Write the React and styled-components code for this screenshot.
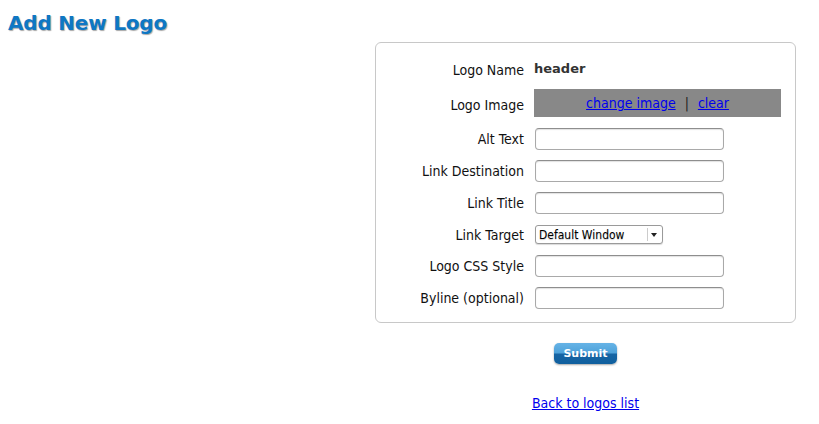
import React from "react";
import styled, { createGlobalStyle } from "styled-components";

const Global = createGlobalStyle`
  html, body { margin: 0; padding: 0; background: #fff; }
  body { font-family: "DejaVu Sans Condensed", "DejaVu Sans", Verdana, sans-serif; color: #000; }
`;

const Page = styled.div`
  padding: 8px 8px 0 8px;
`;

const Title = styled.h1`
  margin: 0;
  font-family: "DejaVu Sans", Verdana, sans-serif;
  font-size: 20px;
  font-weight: bold;
  color: #0e77c4;
  text-shadow: 1px 1px 1px rgba(0, 0, 0, 0.35);
  line-height: 30px;
  letter-spacing: -0.2px;
`;

const Main = styled.div`
  margin-left: 367px;
  width: 421px;
  display: flex;
  flex-direction: column;
  align-items: center;
`;

const Panel = styled.div`
  margin-top: 4px;
  width: 100%;
  box-sizing: border-box;
  border: 1px solid #c8c8c8;
  border-radius: 6px;
  padding: 16px 14px 13px 0;
  display: grid;
  grid-template-columns: 148px 1fr;
  column-gap: 10px;
  row-gap: 10px;
  align-items: center;
`;

const Label = styled.div`
  text-align: right;
  font-size: 14px;
  color: #111;
`;

const Field = styled.div`
  height: ${(p) => p.$h || 22}px;
  display: flex;
  align-items: center;
`;

const Value = styled.div`
  font-family: "DejaVu Sans", Verdana, sans-serif;
  font-weight: bold;
  font-size: 13px;
  color: #333;
  margin-top: -4px;
`;

const ImageBar = styled.div`
  background: #888888;
  height: 28px;
  margin: -2px 0 1px 0;
  display: flex;
  align-items: center;
  justify-content: center;
  gap: 9px;
  font-size: 14px;
  color: #222;
`;

const Link = styled.a`
  color: #0000ee;
  text-decoration: underline;
  font-size: 14px;
  cursor: pointer;
`;

const Input = styled.input`
  display: block;
  box-sizing: border-box;
  width: 189px;
  height: 22px;
  margin: 0 0 0 1px;
  border: 1px solid #a9a9a9;
  border-top-color: #8e8e8e;
  border-radius: 4px;
  box-shadow: inset 0 1px 1px rgba(0,0,0,0.12);
  background: #fff;
  padding: 0 4px;
  font-size: 13px;
`;

const SelectBox = styled.div`
  box-sizing: border-box;
  width: 128px;
  height: 19px;
  margin-left: 1px;
  border: 1px solid #9a9a9a;
  border-radius: 3px;
  background: #fff;
  display: flex;
  align-items: center;
  justify-content: space-between;
  padding: 0 3px 0 3px;
  font-family: "DejaVu Sans Condensed", "DejaVu Sans", sans-serif;
  font-size: 12px;
  color: #000;
  text-shadow: 0 1px 1px rgba(0,0,0,0.2);
  box-shadow: 0 1px 1px rgba(0,0,0,0.15);
`;

const Arrow = styled.div`
  width: 11px;
  height: 13px;
  border-left: 1px solid #ccc;
  display: flex;
  align-items: center;
  justify-content: center;
  &::after {
    content: "";
    border-left: 3px solid transparent;
    border-right: 3px solid transparent;
    border-top: 4px solid #222;
  }
`;

const Button = styled.button`
  margin-top: 20px;
  width: 63px;
  height: 21px;
  border: none;
  border-radius: 5px;
  background: linear-gradient(#66b3e6 0%, #4ea2da 48%, #1765a4 52%, #0f5f9e 100%);
  box-shadow: 0 1px 2px rgba(0,0,0,0.35);
  color: #fff;
  font-family: "DejaVu Sans", Verdana, sans-serif;
  font-weight: bold;
  font-size: 11px;
  padding: 0;
  cursor: pointer;
`;

const Back = styled(Link)`
  margin-top: 31px;
`;

const rows = ["Alt Text", "Link Destination", "Link Title"];
const rows2 = ["Logo CSS Style", "Byline (optional)"];

export default function App() {
  return (
    <>
      <Global />
      <Page>
        <Title>Add New Logo</Title>
        <Main>
          <Panel>
            <Label>Logo Name</Label>
            <Field><Value>header</Value></Field>
            <Label>Logo Image</Label>
            <ImageBar>
              <Link>change image</Link>
              <span>|</span>
              <Link>clear</Link>
            </ImageBar>
            {rows.map((r) => (
              <React.Fragment key={r}>
                <Label>{r}</Label>
                <Field><Input /></Field>
              </React.Fragment>
            ))}
            <Label>Link Target</Label>
            <Field $h={21}>
              <SelectBox>
                <span>Default Window</span>
                <Arrow />
              </SelectBox>
            </Field>
            {rows2.map((r) => (
              <React.Fragment key={r}>
                <Label>{r}</Label>
                <Field><Input /></Field>
              </React.Fragment>
            ))}
          </Panel>
          <Button>Submit</Button>
          <Back>Back to logos list</Back>
        </Main>
      </Page>
    </>
  );
}
